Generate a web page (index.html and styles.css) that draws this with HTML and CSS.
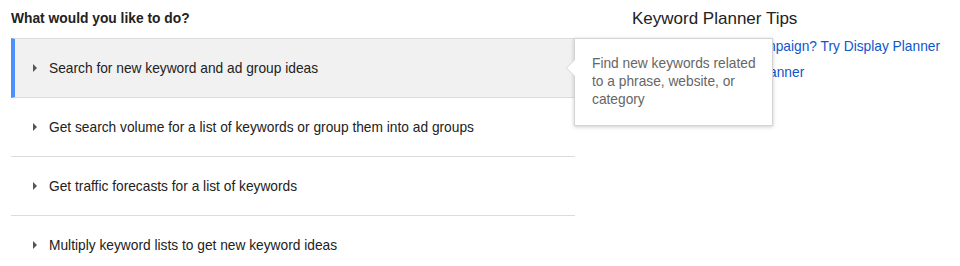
FILE: index.html
```html
<!DOCTYPE html>
<html lang="en">
<head>
    <meta charset="UTF-8">
    <title>Keyword Planner</title>
    <link rel="stylesheet" href="styles.css">
</head>
<body>
    <div class="page">
        <div class="tasks">
            <h2 class="tasks-title">What would you like to do?</h2>
            <div class="task active">
                <span class="arrow"></span>
                <span>Search for new keyword and ad group ideas</span>
                <div class="tip">Find new keywords related to a phrase, website, or category</div>
            </div>
            <div class="task">
                <span class="arrow"></span>
                <span>Get search volume for a list of keywords or group them into ad groups</span>
            </div>
            <div class="task">
                <span class="arrow"></span>
                <span>Get traffic forecasts for a list of keywords</span>
            </div>
            <div class="task">
                <span class="arrow"></span>
                <span>Multiply keyword lists to get new keyword ideas</span>
            </div>
        </div>
        <div class="tips">
            <h2 class="tips-title">Keyword Planner Tips</h2>
            <a href="#">Planning a Display campaign? Try Display Planner</a>
            <a href="#">Tips about Keyword Planner</a>
        </div>
    </div>
</body>
</html>
```

FILE: styles.css
```css
body {
    margin: 0;
    background: #fff;
    font-family: "Liberation Sans", Arial, sans-serif;
    color: #222;
}

.page {
    display: flex;
    padding: 11px 0 0 11px;
}

.tasks {
    width: 564px;
}

.tasks-title {
    margin: 0 0 11px;
    font-size: 13.8px;
    font-weight: bold;
    line-height: 16px;
}

.task {
    position: relative;
    display: flex;
    align-items: center;
    gap: 10px;
    height: 58px;
    padding-left: 22px;
    border-bottom: 1px solid #dcdcdc;
    font-size: 13.75px;
}

.task.active {
    background: #f1f1f1;
    border-top: 1px solid #dcdcdc;
    border-left: 4px solid #4d90fe;
    padding-left: 18px;
}

.arrow {
    width: 0;
    height: 0;
    border-top: 4px solid transparent;
    border-bottom: 4px solid transparent;
    border-left: 4px solid #555;
    margin-right: 2px;
}

/* tooltip over the tips column */
.tip {
    position: absolute;
    left: 559px;
    top: -1px;
    width: 166px;
    padding: 16px 14px 16px 17px;
    background: #fff;
    border: 1px solid #d4d4d4;
    box-shadow: 0 1px 4px rgba(0, 0, 0, 0.2);
    color: #666;
    font-size: 13.75px;
    line-height: 18px;
    z-index: 2;
}

.tip::before {
    content: "";
    position: absolute;
    left: -9px;
    top: 20px;
    border-top: 9px solid transparent;
    border-bottom: 9px solid transparent;
    border-right: 9px solid #d4d4d4;
}

.tip::after {
    content: "";
    position: absolute;
    left: -8px;
    top: 20px;
    border-top: 9px solid transparent;
    border-bottom: 9px solid transparent;
    border-right: 9px solid #fff;
}

.tips {
    display: flex;
    flex-direction: column;
    margin-left: 57px;
}

.tips-title {
    margin: 0 0 7px;
    font-size: 17px;
    font-weight: normal;
    line-height: 16px;
}

.tips a {
    color: #1155cc;
    text-decoration: none;
    font-size: 13.75px;
    line-height: 26px;
    white-space: nowrap;
}
```
